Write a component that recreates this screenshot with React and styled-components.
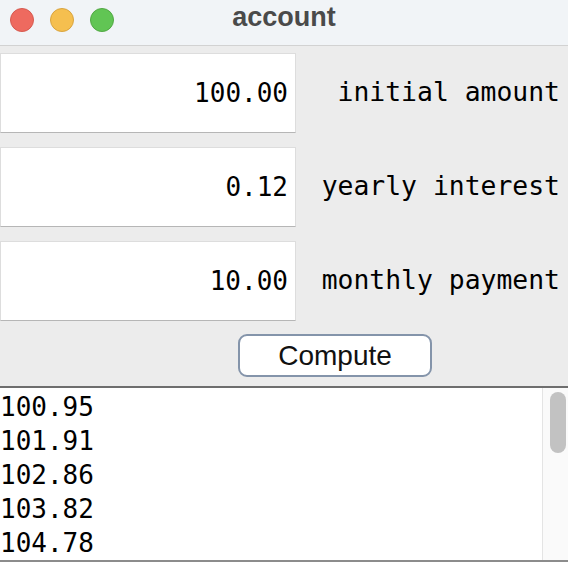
import React from 'react'
import styled, { createGlobalStyle } from 'styled-components'

const Global = createGlobalStyle`
  html, body {
    margin: 0;
    padding: 0;
    background: #ececec;
    overflow: hidden;
  }
  * { box-sizing: border-box; }
`

const Window = styled.div`
  width: 568px;
  height: 562px;
  display: flex;
  flex-direction: column;
  background: #ececec;
  overflow: hidden;
`

const TitleBar = styled.div`
  height: 46px;
  display: grid;
  grid-template-columns: 1fr auto 1fr;
  align-items: start;
  background: #f1f4f7;
  border-bottom: 1px solid #d2d2d2;
`

const Lights = styled.div`
  display: flex;
  gap: 16px;
  padding-left: 10px;
  margin-top: 8px;
`

const Light = styled.span`
  width: 24px;
  height: 24px;
  border-radius: 50%;
  background: ${p => p.color};
  border: 1px solid ${p => p.edge};
`

const Title = styled.div`
  font-family: "Liberation Sans", Arial, sans-serif;
  font-weight: 700;
  font-size: 27px;
  line-height: 30px;
  margin-top: 2px;
  color: #4a4a4a;
`

const Form = styled.div`
  display: flex;
  flex-direction: column;
  gap: 14px;
  padding-top: 7px;
`

const Row = styled.div`
  display: grid;
  grid-template-columns: 296px 1fr;
  height: 80px;
`

const Field = styled.input`
  width: 100%;
  height: 100%;
  margin: 0;
  padding: 0 7px 0 0;
  border: 1px solid #dddddd;
  border-bottom-color: #b6b6b6;
  border-radius: 0;
  background: #fff;
  outline: none;
  text-align: right;
  font-family: "DejaVu Sans Mono", monospace;
  font-size: 26px;
  color: #000;
`

const Label = styled.div`
  display: flex;
  align-items: center;
  justify-content: flex-end;
  padding: 0 8px 3px 0;
  font-family: "DejaVu Sans Mono", monospace;
  font-size: 26.4px;
  color: #000;
`

const ButtonRow = styled.div`
  display: flex;
  padding-left: 238px;
  margin-top: 13px;
  margin-bottom: 9px;
`

const Button = styled.button`
  width: 194px;
  height: 43px;
  padding: 0;
  border: 2px solid #8494aa;
  border-radius: 9px;
  background: #fff;
  font-family: "Liberation Sans", Arial, sans-serif;
  font-size: 28px;
  color: #111;
`

const Output = styled.div`
  flex: 1;
  display: flex;
  background: #fff;
  border-top: 2px solid #6e6e6e;
  border-bottom: 2px solid #8c8c8c;
  overflow: hidden;
`

const Lines = styled.div`
  flex: 1;
  padding-top: 2px;
  font-family: "DejaVu Sans Mono", monospace;
  font-size: 26px;
  line-height: 34px;
  color: #000;
`

const Track = styled.div`
  width: 26px;
  background: #fafafa;
  border-left: 1px solid #e4e4e4;
  padding: 4px 2px 0 7px;
`

const Thumb = styled.div`
  width: 16px;
  height: 61px;
  border-radius: 8px;
  background: #c2c2c2;
`

const rows = [
  ['100.00', 'initial amount'],
  ['0.12', 'yearly interest'],
  ['10.00', 'monthly payment'],
]

const results = ['100.95', '101.91', '102.86', '103.82', '104.78']

const App = () => {
  return (
    <Window>
      <Global />
      <TitleBar>
        <Lights>
          <Light color="#ee6a5f" edge="#d65a50" />
          <Light color="#f5bf4f" edge="#d9a43f" />
          <Light color="#61c554" edge="#52a844" />
        </Lights>
        <Title>account</Title>
        <div />
      </TitleBar>
      <Form>
        {rows.map(([value, label]) => (
          <Row key={label}>
            <Field defaultValue={value} readOnly />
            <Label>{label}</Label>
          </Row>
        ))}
      </Form>
      <ButtonRow>
        <Button>Compute</Button>
      </ButtonRow>
      <Output>
        <Lines>
          {results.map(r => (
            <div key={r}>{r}</div>
          ))}
        </Lines>
        <Track>
          <Thumb />
        </Track>
      </Output>
    </Window>
  )
}

export default App
